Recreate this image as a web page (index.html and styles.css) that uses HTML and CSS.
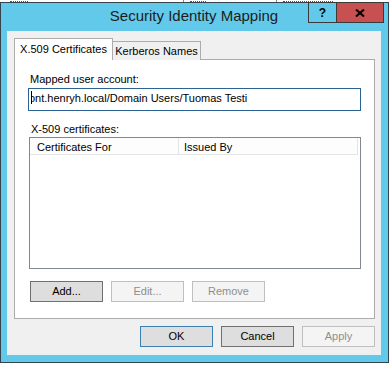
FILE: index.html
```html
<!DOCTYPE html>
<html>
<head>
<meta charset="utf-8">
<link rel="stylesheet" href="styles.css">
</head>
<body>
<div class="under">
  <span class="frag f1"></span>
  <span class="sep s1"></span>
  <span class="frag f2"></span>
  <span class="sep s2"></span>
  <span class="frag f3"></span>
</div>
<div class="window">
  <div class="titlebar">
    <div class="title">Security Identity Mapping</div>
    <div class="caption">
      <div class="cap-btn help">?</div>
      <div class="cap-btn close">
        <svg width="10" height="8" viewBox="0 0 10 8"><path d="M1 0.5 L9 7.5 M9 0.5 L1 7.5" stroke="#000" stroke-width="2.1" fill="none"/></svg>
      </div>
    </div>
  </div>
  <div class="client">
    <div class="tabs">
      <div class="tab active">X.509 Certificates</div>
      <div class="tab">Kerberos Names</div>
    </div>
    <div class="page">
      <div class="label l1">Mapped user account:</div>
      <div class="input">
        <span class="caret"></span>
        <div class="input-text"><span>ont.henryh.local/Domain Users/Tuomas Testi</span></div>
      </div>
      <div class="label l2">X-509 certificates:</div>
      <div class="list">
        <div class="header">
          <div class="col c1">Certificates For</div>
          <div class="col c2">Issued By</div>
        </div>
      </div>
      <div class="row-buttons">
        <div class="btn">Add...</div>
        <div class="btn disabled">Edit...</div>
        <div class="btn disabled">Remove</div>
      </div>
    </div>
    <div class="dialog-buttons">
      <div class="btn default">OK</div>
      <div class="btn">Cancel</div>
      <div class="btn disabled">Apply</div>
    </div>
  </div>
</div>
</body>
</html>
```
FILE: styles.css
```css
html, body {
  margin: 0;
  padding: 0;
}
body {
  width: 390px;
  height: 365px;
  overflow: hidden;
  background: #ffffff;
  font-family: "Liberation Sans", Arial, sans-serif;
  font-size: 11px;
  color: #000;
}

.under {
  height: 2px;
  overflow: hidden;
  display: flex;
  align-items: flex-start;
}
.under .frag {
  display: block;
  height: 1px;
  border-bottom: 1px dotted #555;
}
.under .sep {
  display: block;
  width: 1px;
  height: 2px;
  background: #888;
}
.f1 { margin-left: 10px; width: 18px; }
.s1 { margin-left: 155px; }
.f2 { margin-left: 6px; width: 16px; }
.s2 { margin-left: 70px; }
.f3 { margin-left: 6px; width: 50px; }

.window {
  width: 389px;
  box-sizing: border-box;
  border: 1px solid #34444c;
  background: #63c9eb;
  padding: 0 7px 7px 6px;
}

.titlebar {
  height: 28px;
  position: relative;
}
.title {
  text-align: center;
  font-size: 15px;
  line-height: 26px;
  color: #1c1c1c;
}
.caption {
  position: absolute;
  top: -1px;
  left: 301px;
  display: flex;
}
.cap-btn {
  box-sizing: border-box;
  height: 21px;
  border: 1px solid #3a3a3a;
  display: flex;
  align-items: center;
  justify-content: center;
}
.help {
  width: 29px;
  font-weight: bold;
  font-size: 12px;
  color: #000;
  padding-top: 1px;
}
.close {
  width: 47px;
  border-left: 0;
  background: #c75050;
}

.client {
  height: 324px;
  box-sizing: border-box;
  background: #f0f0f0;
  padding: 7px 6px 0 7px;
}

.tabs {
  display: flex;
  align-items: flex-end;
  height: 22px;
  margin-bottom: -1px;
}
.tab {
  box-sizing: border-box;
  width: 88px;
  height: 19px;
  border-top: 1px solid #acacac;
  border-right: 1px solid #acacac;
  background: #f0f0f0;
  text-align: center;
  line-height: 13px;
  padding-top: 3px;
  white-space: nowrap;
}
.tab.active {
  position: relative;
  z-index: 1;
  width: 99px;
  height: 22px;
  border-left: 1px solid #acacac;
  background: #ffffff;
  padding-top: 4px;
}

.page {
  box-sizing: border-box;
  height: 260px;
  border: 1px solid #acacac;
  background: #ffffff;
  padding: 0 13px;
}

.label {
  line-height: 13px;
  color: #000;
  white-space: nowrap;
}
.l1 {
  margin-top: 13px;
  margin-left: 2px;
}
.l2 {
  margin-top: 12px;
  margin-left: 3px;
}

.input {
  position: relative;
  box-sizing: border-box;
  width: 333px;
  height: 23px;
  margin-top: 2px;
  border: 1px solid #2a6394;
  background: #fff;
  padding-left: 2px;
  line-height: 19px;
}
.input-text {
  overflow: hidden;
  white-space: nowrap;
}
.input-text span {
  margin-left: -2px;
}
.caret {
  position: absolute;
  left: 2px;
  top: 2px;
  width: 1px;
  height: 13px;
  background: #000;
}

.list {
  box-sizing: border-box;
  width: 332px;
  height: 132px;
  margin-top: 1px;
  margin-left: 1px;
  border: 1px solid #828790;
  background: #fff;
}
.header {
  display: flex;
  height: 17px;
  box-sizing: border-box;
  border-bottom: 1px solid #e5e5e5;
  width: 328px;
  background: #fdfdfd;
}
.col {
  box-sizing: border-box;
  height: 16px;
  padding-top: 3px;
  line-height: 13px;
  border-right: 1px solid #e5e5e5;
  white-space: nowrap;
}
.c1 {
  width: 149px;
  padding-left: 7px;
}
.c2 {
  width: 179px;
  padding-left: 5px;
}

.row-buttons {
  display: flex;
  gap: 8px;
  margin-top: 12px;
  margin-left: 2px;
}
.dialog-buttons {
  display: flex;
  justify-content: flex-end;
  gap: 8px;
  margin-top: 7px;
}
.btn {
  box-sizing: border-box;
  width: 73px;
  height: 21px;
  border: 1px solid #707070;
  background: #dedede;
  display: flex;
  align-items: center;
  justify-content: center;
  line-height: 13px;
  color: #000;
}
.btn.default {
  border-color: #3c7fb1;
}
.btn.disabled {
  border-color: #bfbfbf;
  background: #f4f4f4;
  color: #8e8e8e;
}
```
